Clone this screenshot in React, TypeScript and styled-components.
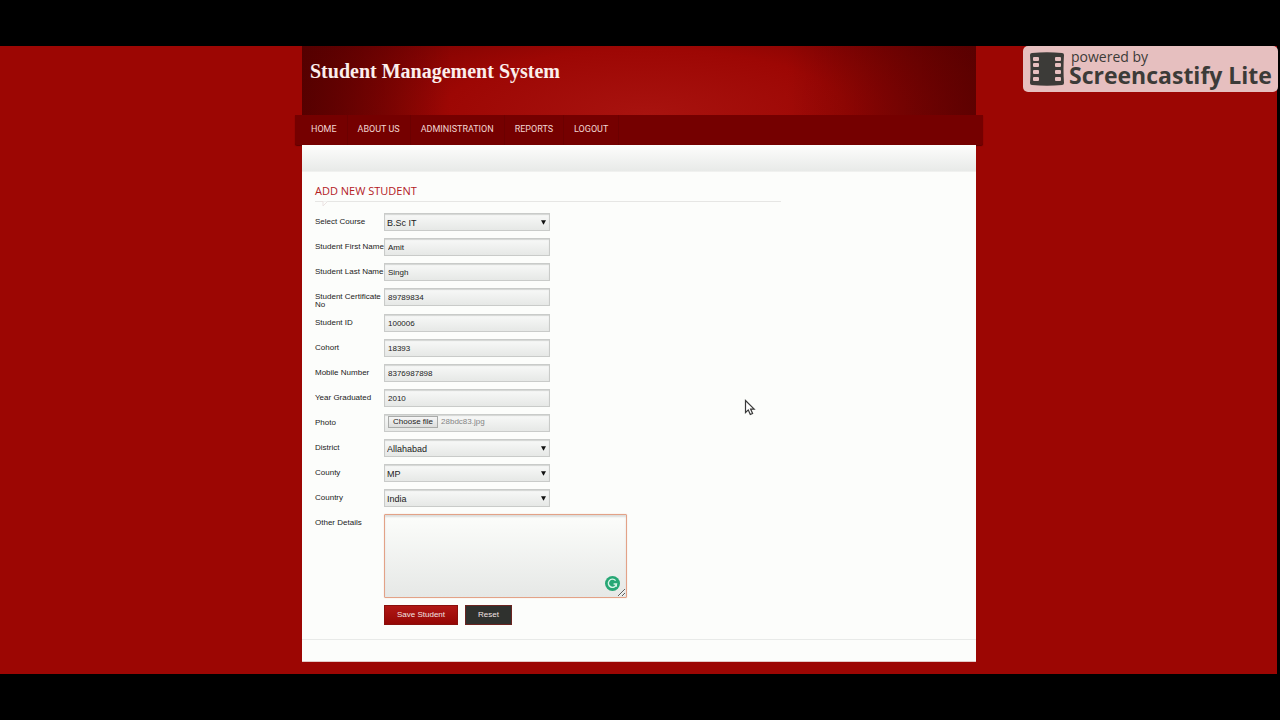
import React from "react";
import styled, { createGlobalStyle, css } from "styled-components";

const GlobalStyle = createGlobalStyle`
  * { box-sizing: border-box; }
  body {
    margin: 0;
    background: #000;
    font-family: "Liberation Sans", Arial, sans-serif;
    font-size: 8px;
    color: #222;
  }
`;

const Screen = styled.div`
  position: relative;
  display: flex;
  flex-direction: column;
  min-height: 100vh;
  padding: 46px 3px 46px 0;
`;

const Stage = styled.div`
  flex: 1;
  padding: 0 7px 12px 8px;
  background: #9c0603;
`;

const Page = styled.div`
  max-width: 674px;
  margin: 0 auto;
`;

const Banner = styled.header`
  height: 69px;
  padding: 13px 8px;
  background:
    linear-gradient(90deg, rgba(80, 0, 0, 0.85) 0, rgba(80, 0, 0, 0) 22%, rgba(80, 0, 0, 0) 72%, rgba(80, 0, 0, 0.7) 100%),
    radial-gradient(ellipse 60% 190% at 51% 100%, #a8130f 0, #9d0704 50%, #6c0000 100%);
`;

const SiteTitle = styled.h1`
  margin: 0;
  font: bold 20px/24px "Liberation Serif", "Times New Roman", serif;
  color: #fbeeec;
`;

const Nav = styled.nav`
  display: flex;
  height: 30px;
  margin: 0 -7px;
  padding-left: 6px;
  background: #750000;
  border-radius: 0 0 2px 2px;
  box-shadow: 0 1px 1px #5c0000;
`;

const NavLink = styled.a`
  padding: 0 10px;
  border-right: 1px solid #6c0000;
  font-family: Roboto, "Liberation Sans", sans-serif;
  font-size: 9px;
  line-height: 29px;
  color: #f2d6d3;
  text-decoration: none;
`;

const Sheet = styled.main`
  position: relative;
  background: #fcfdfb;
`;

const Strip = styled.div`
  height: 27px;
  border-bottom: 1px solid #f0f1ef;
  background: linear-gradient(#fdfdfc, #e8eae8);
`;

const Body = styled.div`
  padding: 11px 13px 14px;
`;

const Heading = styled.h2`
  position: relative;
  max-width: 466px;
  height: 19px;
  margin: 0 0 11px;
  border-bottom: 1px solid #e6e6e4;
  font: 11px/16px "Open Sans", sans-serif;
  color: #b3201f;
`;

const Notch = styled.svg`
  position: absolute;
  left: 6px;
  top: 18px;
`;

const Row = styled.div<{ $tall?: boolean }>`
  display: flex;
  align-items: flex-start;
  height: ${(p) => (p.$tall ? 26 : 25)}px;
`;

const AreaRow = styled(Row)`
  height: auto;
`;

const Label = styled.label`
  flex: none;
  width: 69px;
  padding-top: 5px;
  line-height: 8px;
  white-space: nowrap;
`;

const field = css`
  display: block;
  width: 166px;
  height: 18px;
  margin: 0;
  border: 1px solid #c9cbc9;
  border-radius: 0;
  outline: none;
  background: linear-gradient(#f8f9f8, #e6e8e6);
  box-shadow: inset 0 1px 1px #d3d5d3;
  font-family: inherit;
  font-size: 8px;
  color: #222;
`;

const TextInput = styled.input`
  ${field}
  padding: 1px 3px 0;
`;

const SelectWrap = styled.div`
  position: relative;
`;

const Select = styled.select`
  ${field}
  appearance: none;
  padding: 1px 2px 0;
  font-size: 9px;
`;

const Arrow = styled.svg`
  position: absolute;
  right: 4px;
  top: 7px;
  pointer-events: none;
`;

const FileBox = styled.div`
  ${field}
  position: relative;
  display: flex;
  align-items: flex-start;
  gap: 3px;
  padding: 1px 3px;
`;

const HiddenFile = styled.input`
  position: absolute;
  inset: 0;
  width: 100%;
  height: 100%;
  opacity: 0;
`;

const Choose = styled.span`
  height: 12px;
  padding: 0 4px;
  border: 1px solid #a9aba9;
  background: linear-gradient(#f6f6f6, #dcdddc);
  line-height: 10px;
`;

const FileName = styled.span`
  line-height: 12px;
  color: #858585;
`;

const AreaWrap = styled.div`
  position: relative;
`;

const Area = styled.textarea`
  ${field}
  width: 243px;
  height: 84px;
  padding: 3px;
  border-color: #e3a287;
  border-radius: 1px;
  background: linear-gradient(#fcfdfb, #e6e8e6);
  box-shadow: inset 0 2px 2px #dcdedc, 0 0 1px #e8b59f;
  resize: both;
`;

const Badge = styled.svg`
  position: absolute;
  right: 7px;
  bottom: 7px;
`;

const Actions = styled.div`
  display: flex;
  gap: 7px;
  padding: 7px 0 0 69px;
`;

const Button = styled.button<{ $dark?: boolean }>`
  height: 20px;
  padding: 0 12px;
  border: 1px solid ${(p) => (p.$dark ? "#6b2420" : "#8a0f0c")};
  background: ${(p) => (p.$dark ? "#2f312e" : "linear-gradient(#b01815, #950705)")};
  font-family: inherit;
  font-size: 8px;
  line-height: 18px;
  color: #f3e4e2;
`;

const Footer = styled.footer`
  height: 23px;
  border-top: 1px solid #e8eae8;
  border-bottom: 1px solid #e3c9c7;
`;

const Watermark = styled.aside`
  position: absolute;
  top: 46px;
  right: 2px;
  display: flex;
  align-items: flex-start;
  gap: 5px;
  width: 255px;
  height: 46px;
  padding: 3px 0 0 7px;
  border-radius: 5px;
  background: #e6bfbf;
  font-family: "Open Sans", sans-serif;
  color: #3c3b38;
  white-space: nowrap;
`;

const FilmIcon = styled.svg`
  margin-top: 3px;
`;

const Powered = styled.div`
  padding-left: 2px;
  font-size: 14px;
  line-height: 16px;
`;

const Brand = styled.div`
  font-size: 23px;
  font-weight: 700;
  line-height: 20px;
`;

const Pointer = styled.svg`
  position: absolute;
  left: 442px;
  top: 254px;
`;

type FieldSpec = { id: string; label: React.ReactNode; value: string; kind?: "select"; tall?: boolean };

const before: FieldSpec[] = [
  { id: "course", label: "Select Course", value: "B.Sc IT", kind: "select" },
  { id: "first", label: "Student First Name", value: "Amit" },
  { id: "last", label: "Student Last Name", value: "Singh" },
  { id: "cert", label: <>Student Certificate<br />No</>, value: "89789834", tall: true },
  { id: "sid", label: "Student ID", value: "100006" },
  { id: "cohort", label: "Cohort", value: "18393" },
  { id: "mobile", label: "Mobile Number", value: "8376987898" },
  { id: "year", label: "Year Graduated", value: "2010" },
];

const after: FieldSpec[] = [
  { id: "district", label: "District", value: "Allahabad", kind: "select" },
  { id: "county", label: "County", value: "MP", kind: "select" },
  { id: "country", label: "Country", value: "India", kind: "select" },
];

function Field({ id, label, value, kind, tall }: FieldSpec) {
  return (
    <Row $tall={tall}>
      <Label htmlFor={id}>{label}</Label>
      {kind === "select" ? (
        <SelectWrap>
          <Select id={id} defaultValue={value}>
            <option>{value}</option>
          </Select>
          <Arrow width="5" height="5" viewBox="0 0 5 5" aria-hidden="true">
            <path d="M0 0.2h5L2.5 4.8z" fill="#111" />
          </Arrow>
        </SelectWrap>
      ) : (
        <TextInput id={id} type="text" defaultValue={value} />
      )}
    </Row>
  );
}

export default function App() {
  return (
    <Screen>
      <GlobalStyle />
      <Stage>
        <Page>
          <Banner>
            <SiteTitle>Student Management System</SiteTitle>
          </Banner>
          <Nav>
            {["HOME", "ABOUT US", "ADMINISTRATION", "REPORTS", "LOGOUT"].map((item) => (
              <NavLink key={item} href="#">{item}</NavLink>
            ))}
          </Nav>
          <Sheet>
            <Strip />
            <Body>
              <Heading>
                ADD NEW STUDENT
                <Notch width="8" height="6" viewBox="0 0 8 6" aria-hidden="true">
                  <path d="M0 0.5h2v4.5l4.5-4.5" fill="#fcfdfb" stroke="#ebe3e2" />
                </Notch>
              </Heading>
              <form onSubmit={(e) => e.preventDefault()}>
                {before.map((f) => <Field key={f.id} {...f} />)}
                <Row>
                  <Label htmlFor="photo">Photo</Label>
                  <FileBox>
                    <Choose>Choose file</Choose>
                    <FileName>28bdc83.jpg</FileName>
                    <HiddenFile id="photo" type="file" />
                  </FileBox>
                </Row>
                {after.map((f) => <Field key={f.id} {...f} />)}
                <AreaRow>
                  <Label htmlFor="details">Other Details</Label>
                  <AreaWrap>
                    <Area id="details" />
                    <Badge width="15" height="15" viewBox="0 0 15 15" aria-hidden="true">
                      <circle cx="7.5" cy="7.5" r="7.5" fill="#27a775" />
                      <path d="M10.6 4.6A4.1 4.1 0 1 0 11.5 8H8.6M11.3 8v2.8" fill="none" stroke="#d9f5e8" strokeWidth="1.4" />
                    </Badge>
                  </AreaWrap>
                </AreaRow>
                <Actions>
                  <Button type="submit">Save Student</Button>
                  <Button type="reset" $dark>Reset</Button>
                </Actions>
              </form>
            </Body>
            <Footer />
            <Pointer width="12" height="18" viewBox="0 0 12 18" aria-hidden="true">
              <path d="M1.5 1.5v12l2.8-2.6 2 4.6 2.3-1-2-4.4h3.6z" fill="#fff" stroke="#3a3a3a" strokeWidth="1.2" />
            </Pointer>
          </Sheet>
        </Page>
      </Stage>
      <Watermark>
        <FilmIcon width="34" height="34" viewBox="0 0 34 34" aria-hidden="true">
          <path d="M2 1Q17-.5 32 1Q34 1 34 3Q33 17 34 31Q34 33 32 33Q17 34.5 2 33Q0 33 0 31Q1 17 0 3Q0 1 2 1z" fill="#3c3b38" />
          <g fill="#e6bfbf">
            {[5, 11, 18, 25].map((y) => (
              <React.Fragment key={y}>
                <rect x="3" y={y} width="6" height="4" rx="1" />
                <rect x="25" y={y} width="6" height="4" rx="1" />
              </React.Fragment>
            ))}
          </g>
        </FilmIcon>
        <div>
          <Powered>powered by</Powered>
          <Brand>Screencastify Lite</Brand>
        </div>
      </Watermark>
    </Screen>
  );
}
